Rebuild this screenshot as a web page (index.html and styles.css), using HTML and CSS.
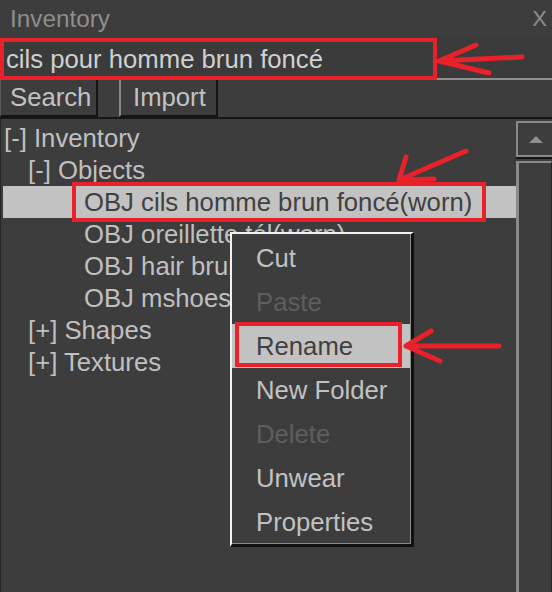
FILE: index.html
```html
<!DOCTYPE html>
<html lang="fr">
<head>
<meta charset="utf-8">
<title>Inventory</title>
<link rel="stylesheet" href="styles.css">
</head>
<body>
<div class="window">
  <div class="titlebar">
    <span class="title">Inventory</span>
    <span class="close">X</span>
  </div>
  <div class="searchbox">cils pour homme brun foncé</div>
  <div class="buttons">
    <div class="btn btn-search">Search</div>
    <div class="btn btn-import">Import</div>
  </div>
  <div class="main">
    <div class="tree">
      <div class="row lvl0">[-] Inventory</div>
      <div class="row lvl1">[-] Objects</div>
      <div class="row lvl2 selected">OBJ cils homme brun foncé(worn)</div>
      <div class="row lvl2">OBJ oreillette tél(worn)</div>
      <div class="row lvl2">OBJ hair brun</div>
      <div class="row lvl2">OBJ mshoes</div>
      <div class="row lvl1">[+] Shapes</div>
      <div class="row lvl1">[+] Textures</div>
    </div>
    <div class="scrollbar">
      <div class="scroll-up"><span class="tri"></span></div>
      <div class="scroll-track"></div>
    </div>
  </div>

  <div class="menu">
    <div class="item">Cut</div>
    <div class="item disabled">Paste</div>
    <div class="item active">Rename</div>
    <div class="item">New Folder</div>
    <div class="item disabled">Delete</div>
    <div class="item">Unwear</div>
    <div class="item">Properties</div>
  </div>

  <svg class="annot" width="552" height="592" viewBox="0 0 552 592">
    <g fill="none" stroke="#e8212b" stroke-width="4">
      <rect x="2" y="40" width="433" height="38"/>
      <rect x="74" y="184" width="410" height="36"/>
      <rect x="237" y="324" width="163" height="41"/>
    </g>
    <g fill="none" stroke="#e8212b" stroke-width="5" stroke-linecap="round" stroke-linejoin="round">
      <path d="M439 61 L522 57 M439 61 L476 45 M439 61 L489 73"/>
      <path d="M399 180 L466 151 M399 180 L406 157 M399 180 L434 179"/>
      <path d="M406 346 L499 346 M406 346 L431 331 M406 346 L440 361"/>
    </g>
  </svg>
</div>
</body>
</html>
```
FILE: styles.css
```css
html, body {
  margin: 0;
  padding: 0;
}
body {
  background: #3d3d3d;
  font-family: "Liberation Sans", Arial, sans-serif;
  font-size: 25.7px;
  color: #c2c2c2;
  width: 552px;
  height: 592px;
  overflow: hidden;
}
.window {
  position: relative;
  width: 552px;
  height: 592px;
  display: flex;
  flex-direction: column;
}
.titlebar {
  height: 38px;
  line-height: 38px;
  display: flex;
  justify-content: space-between;
  padding: 0 5px 0 10px;
  color: #8e8e8e;
  font-size: 24.3px;
}
.close {
  font-size: 22px;
}
.searchbox {
  height: 38px;
  line-height: 38px;
  padding-top: 2px;
  padding-left: 6px;
  color: #d0d0d0;
  border-bottom: 2px solid #8f8f8f;
  background: #3b3b3b;
}
.buttons {
  height: 37px;
  display: flex;
}
.btn {
  line-height: 35px;
  height: 35px;
  color: #c2c2c2;
  border-right: 2px solid #141414;
  border-bottom: 2px solid #141414;
}
.btn-search {
  width: 86px;
  padding-left: 9px;
  border-left: 1px solid #5a5a5a;
}
.btn-import {
  margin-left: 21px;
  width: 83px;
  padding-left: 12px;
  border-left: 2px solid #8a8a8a;
}
.main {
  flex: 1;
  display: flex;
  border-top: 2px solid #161616;
  border-left: 1px solid #262626;
}
.tree {
  flex: 1;
  padding-top: 3px;
  padding-left: 2px;
}
.row {
  height: 32px;
  line-height: 32px;
  white-space: nowrap;
  color: #c0c0c0;
}
.lvl0 { padding-left: 1px; }
.lvl1 { padding-left: 25px; }
.lvl2 { padding-left: 81px; }
.row.selected {
  background: #c2c2c2;
  color: #404040;
}
.scrollbar {
  width: 36px;
  display: flex;
  flex-direction: column;
  padding-top: 2px;
}
.scroll-up {
  height: 32px;
  border: 2px solid #8a8a8a;
  border-right: none;
  box-shadow: 0 2px 0 #151515;
  display: flex;
  align-items: center;
  justify-content: center;
  margin-bottom: 4px;
}
.tri {
  width: 0;
  height: 0;
  border-left: 7px solid transparent;
  border-right: 7px solid transparent;
  border-bottom: 7px solid #8f8f8f;
  margin-left: 2px;
}
.scroll-track {
  flex: 1;
  border-left: 3px solid #8a8a8a;
  border-top: 2px solid #8a8a8a;
  border-right: 1px solid #262626;
}
.menu {
  position: absolute;
  left: 230px;
  top: 232px;
  width: 179px;
  padding: 2px 0 0 0;
  background: #3d3d3d;
  border-left: 2px solid #f2f2f2;
  border-top: 2px solid #f2f2f2;
  border-right: 3px solid #111;
  border-bottom: 3px solid #111;
  box-shadow: inset -1px -1px 0 #8a8a8a;
}
.item {
  height: 44px;
  line-height: 44px;
  padding-left: 24px;
  color: #c2c2c2;
}
.item.disabled {
  color: #5e5e5e;
}
.item.active {
  background: #c2c2c2;
  color: #404040;
  margin-right: 1px;
}
.annot {
  position: absolute;
  left: 0;
  top: 0;
  pointer-events: none;
}
```
